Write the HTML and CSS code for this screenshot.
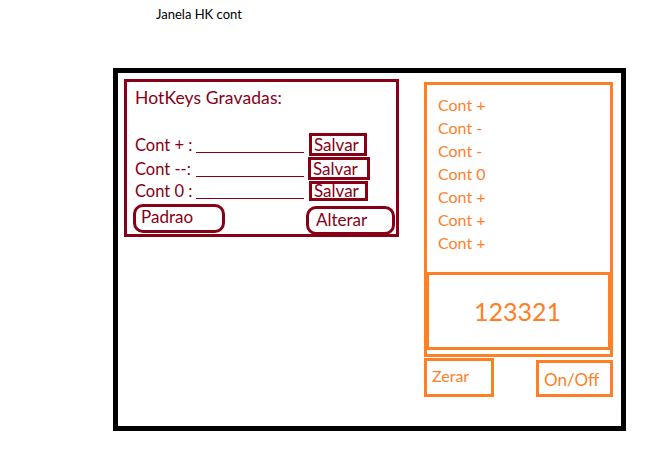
FILE: index.html
```html
<!DOCTYPE html>
<html lang="pt">
<head>
<meta charset="utf-8">
<title>Janela HK cont</title>
<link rel="stylesheet" href="styles.css">
</head>
<body>
  <div class="title">Janela HK cont</div>
  <div class="frame">
    <section class="hk">
      <div class="hk-title">HotKeys Gravadas:</div>
      <div class="rows">
        <div class="row">
          <div class="field"><span class="lbl">Cont + :</span><span class="line"></span></div>
          <div class="save s1">Salvar</div>
        </div>
        <div class="row">
          <div class="field"><span class="lbl">Cont --:</span><span class="line"></span></div>
          <div class="save s2">Salvar</div>
        </div>
        <div class="row">
          <div class="field"><span class="lbl">Cont 0 :</span><span class="line"></span></div>
          <div class="save s3">Salvar</div>
        </div>
      </div>
      <div class="actions">
        <div class="pill padrao">Padrao</div>
        <div class="pill alterar">Alterar</div>
      </div>
    </section>
    <section class="side">
      <div class="log">
        <ul class="list">
          <li>Cont +</li>
          <li>Cont -</li>
          <li>Cont -</li>
          <li>Cont 0</li>
          <li>Cont +</li>
          <li>Cont +</li>
          <li>Cont +</li>
        </ul>
        <div class="count">123321</div>
      </div>
      <div class="btns">
        <div class="obtn zerar">Zerar</div>
        <div class="obtn onoff">On/Off</div>
      </div>
    </section>
  </div>
</body>
</html>
```

FILE: styles.css
```css
* { box-sizing: border-box; }
html, body { margin: 0; padding: 0; background: #fff; }
body {
  font-family: Lato, "Open Sans", "Noto Sans", sans-serif;
  width: 657px;
  height: 460px;
  overflow: hidden;
}
.title {
  padding: 6px 0 0 156px;
  font-size: 13px;
  line-height: 16px;
  color: #000;
}
.frame {
  margin: 46px 0 0 113px;
  width: 513px;
  height: 363px;
  border: 5px solid #000;
  padding: 6px 0 0 6px;
  display: flex;
  align-items: flex-start;
  gap: 25px;
}

/* left: hotkeys panel */
.hk {
  width: 275px;
  height: 158px;
  border: 3px solid #880015;
  color: #880015;
  padding: 6px 0 0 8px;
  display: flex;
  flex-direction: column;
}
.hk-title {
  font-size: 17.5px;
  line-height: 20px;
  letter-spacing: 0.1px;
}
.rows {
  margin-top: 25px;
  display: flex;
  flex-direction: column;
  gap: 1px;
}
.row {
  display: flex;
  align-items: baseline;
  font-size: 16.5px;
  height: 23px;
}
.field { line-height: 17px; }
.lbl {
  display: inline-block;
  width: 61px;
}
.line {
  display: inline-block;
  width: 108px;
  height: 1px;
  background: #880015;
  vertical-align: -2px;
}
.save {
  border: 3px solid #880015;
  line-height: 17px;
  padding: 0 0 0 2px;
  margin-left: 5px;
  font-size: 17px;
}
.s1 { width: 58px; }
.s2 { width: 62px; margin-left: 4px; }
.s3 { width: 59px; line-height: 14px; }
.actions {
  margin-top: 0;
  display: flex;
  justify-content: space-between;
  align-items: flex-start;
  padding-right: 1px;
  margin-left: -2px;
}
.pill {
  border: 3px solid #880015;
  border-radius: 10px;
  font-size: 17px;
  line-height: 20px;
}
.padrao {
  width: 92px;
  height: 29px;
  padding: 0 0 0 5px;
}
.alterar {
  width: 89px;
  height: 29px;
  margin-top: 2px;
  padding: 1px 0 0 7px;
}

/* right: counter panel */
.side {
  width: 189px;
  margin-top: 3px;
  display: flex;
  flex-direction: column;
  gap: 1px;
  color: #ff7f27;
}
.log {
  border: 3px solid #ff7f27;
  height: 275px;
  display: flex;
  flex-direction: column;
  padding-bottom: 4px;
}
.list {
  list-style: none;
  margin: 0;
  padding: 8px 0 0 11px;
  font-size: 16px;
  line-height: 23px;
  flex: 1;
}
.count {
  height: 78px;
  border: 3px solid #ff7f27;
  border-left-width: 2px;
  border-right-width: 2px;
  display: flex;
  align-items: center;
  justify-content: center;
  font-size: 25px;
  line-height: 30px;
  padding-right: 2px;
}
.btns {
  display: flex;
  justify-content: space-between;
  align-items: flex-start;
}
.obtn {
  border: 3px solid #ff7f27;
  font-size: 16px;
  line-height: 20px;
}
.zerar {
  width: 70px;
  height: 39px;
  padding: 5px 0 0 5px;
}
.onoff {
  width: 77px;
  height: 37px;
  margin-top: 2px;
  padding: 7px 0 0 5px;
  font-size: 17px;
}
```
